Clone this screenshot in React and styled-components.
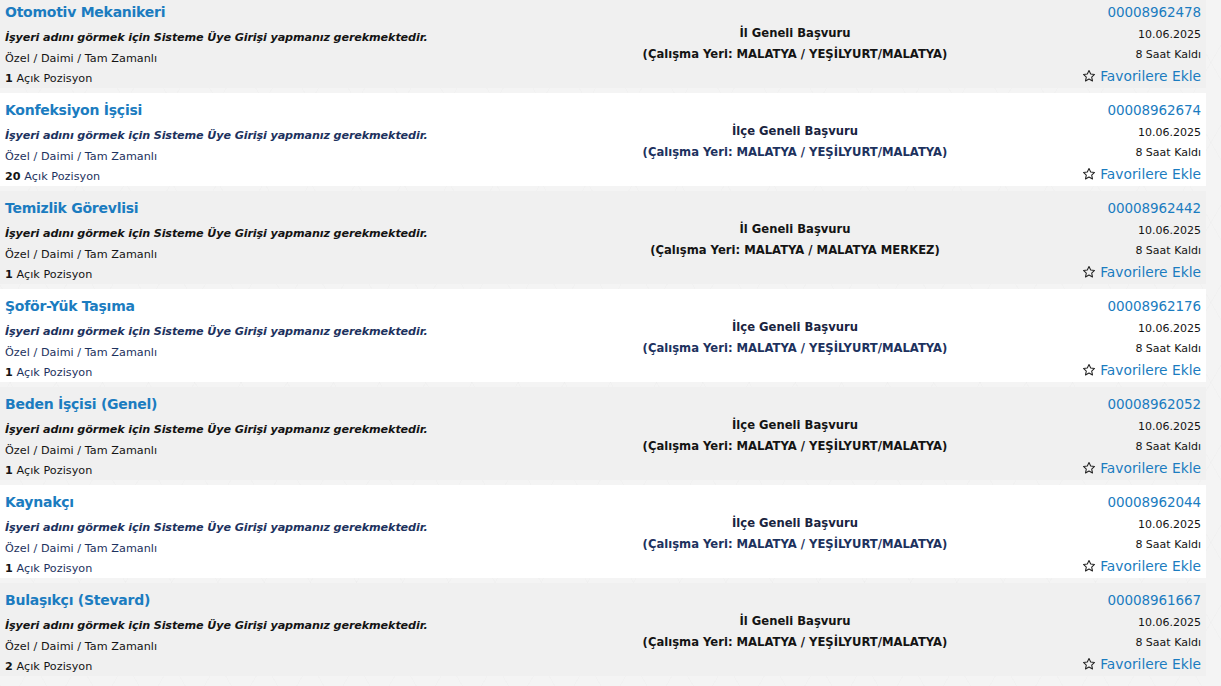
import React from "react";
import styled, { createGlobalStyle } from "styled-components";

const Global = createGlobalStyle`
  html, body { margin: 0; padding: 0; }
  body {
    background: #f3f3f3;
    font-family: "DejaVu Sans", Verdana, sans-serif;
    overflow: hidden;
  }
`;

const Page = styled.div`
  width: 1221px;
  height: 686px;
  overflow: hidden;
  background:
    repeating-linear-gradient(60deg, rgba(0,0,0,0.012) 0 1px, transparent 1px 40px),
    repeating-linear-gradient(-60deg, rgba(0,0,0,0.012) 0 1px, transparent 1px 40px),
    #f4f4f4;
`;

const List = styled.div`
  width: 1206px;
  margin-top: -5px;
  display: flex;
  flex-direction: column;
  gap: 5px;
`;

const Row = styled.div`
  height: 93px;
  box-sizing: border-box;
  padding: 6px 5px 0 5px;
  display: grid;
  grid-template-columns: 585px 410px 1fr;
  background: ${(p) => (p.$alt ? "#ffffff" : "#f0f0f0")};
  color: ${(p) => (p.$alt ? "#1d325e" : "#141414")};
`;

const Left = styled.div`
  display: flex;
  flex-direction: column;
`;

const Title = styled.a`
  font-size: 14px;
  font-weight: bold;
  line-height: 22px;
  color: #1b7cc0;
  letter-spacing: -0.25px;
  text-decoration: none;
  margin-bottom: 5px;
  white-space: nowrap;
`;

const Line = styled.div`
  font-size: 11.2px;
  line-height: 20.7px;
  letter-spacing: 0.05px;
  white-space: nowrap;
`;

const Notice = styled(Line)`
  font-weight: bold;
  font-style: italic;
  letter-spacing: -0.13px;
`;

const Count = styled.b`
  color: #141414;
`;

const Center = styled.div`
  padding-top: 22px;
  display: flex;
  flex-direction: column;
  align-items: center;
  font-size: 11.6px;
  font-weight: bold;
  line-height: 21px;
  white-space: nowrap;
`;

const Scope = styled.div`
  color: ${(p) => (p.$alt ? "#1a2440" : "#141414")};
`;

const Place = styled.div``;

const Right = styled.div`
  display: flex;
  flex-direction: column;
  align-items: flex-end;
  white-space: nowrap;
`;

const Id = styled.a`
  font-size: 13.5px;
  line-height: 22px;
  margin-bottom: 2px;
  color: #1b7cc0;
  text-decoration: none;
  letter-spacing: -0.1px;
`;

const Small = styled.div`
  font-size: 11px;
  line-height: 20px;
  color: #141414;
`;

const Fav = styled.a`
  display: flex;
  align-items: center;
  gap: 4px;
  margin-top: 1px;
  font-size: 13.8px;
  line-height: 20px;
  color: #1b7cc0;
  text-decoration: none;
`;

const StarIcon = () => (
  <svg width="14" height="14" viewBox="0 0 24 24" fill="none" stroke="#222" strokeWidth="1.8" strokeLinejoin="round">
    <path d="M12 2.5l2.9 6.2 6.6.7-4.9 4.5 1.4 6.6L12 17.2l-6 3.3 1.4-6.6-4.9-4.5 6.6-.7z" />
  </svg>
);

const jobs = [
  { title: "Otomotiv Mekanikeri", scope: "İl Geneli Başvuru", place: "MALATYA / YEŞİLYURT/MALATYA", id: "00008962478", count: 1 },
  { title: "Konfeksiyon İşçisi", scope: "İlçe Geneli Başvuru", place: "MALATYA / YEŞİLYURT/MALATYA", id: "00008962674", count: 20 },
  { title: "Temizlik Görevlisi", scope: "İl Geneli Başvuru", place: "MALATYA / MALATYA MERKEZ", id: "00008962442", count: 1 },
  { title: "Şoför-Yük Taşıma", scope: "İlçe Geneli Başvuru", place: "MALATYA / YEŞİLYURT/MALATYA", id: "00008962176", count: 1 },
  { title: "Beden İşçisi (Genel)", scope: "İlçe Geneli Başvuru", place: "MALATYA / YEŞİLYURT/MALATYA", id: "00008962052", count: 1 },
  { title: "Kaynakçı", scope: "İlçe Geneli Başvuru", place: "MALATYA / YEŞİLYURT/MALATYA", id: "00008962044", count: 1 },
  { title: "Bulaşıkçı (Stevard)", scope: "İl Geneli Başvuru", place: "MALATYA / YEŞİLYURT/MALATYA", id: "00008961667", count: 2 },
];

export default function App() {
  return (
    <Page>
      <Global />
      <List>
        {jobs.map((j, i) => {
          const alt = i % 2 === 1;
          return (
            <Row key={j.id} $alt={alt}>
              <Left>
                <Title href="#">{j.title}</Title>
                <Notice>İşyeri adını görmek için Sisteme Üye Girişi yapmanız gerekmektedir.</Notice>
                <Line>Özel / Daimi / Tam Zamanlı</Line>
                <Line>
                  <Count>{j.count}</Count> Açık Pozisyon
                </Line>
              </Left>
              <Center>
                <Scope $alt={alt}>{j.scope}</Scope>
                <Place>(Çalışma Yeri: {j.place})</Place>
              </Center>
              <Right>
                <Id href="#">{j.id}</Id>
                <Small>10.06.2025</Small>
                <Small>8 Saat Kaldı</Small>
                <Fav href="#">
                  <StarIcon />
                  Favorilere Ekle
                </Fav>
              </Right>
            </Row>
          );
        })}
      </List>
    </Page>
  );
}
